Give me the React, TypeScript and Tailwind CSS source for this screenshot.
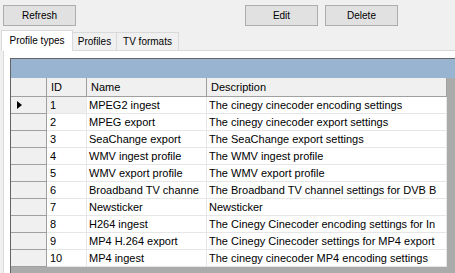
import React from 'react';

const rows: [string, string, string][] = [
  ['1', 'MPEG2 ingest', 'The cinegy cinecoder encoding settings'],
  ['2', 'MPEG export', 'The cinegy cinecoder export settings'],
  ['3', 'SeaChange export', 'The SeaChange export settings'],
  ['4', 'WMV ingest profile', 'The WMV ingest profile'],
  ['5', 'WMV export profile', 'The WMV export profile'],
  ['6', 'Broadband TV channe', 'The Broadband TV channel settings for DVB B'],
  ['7', 'Newsticker', 'Newsticker'],
  ['8', 'H264 ingest', 'The Cinegy Cinecoder encoding settings for In'],
  ['9', 'MP4 H.264 export', 'The Cinegy Cinecoder settings for MP4 export'],
  ['10', 'MP4 ingest', 'The cinegy cinecoder MP4 encoding settings'],
];

function Btn({ children }: { children: React.ReactNode }) {
  return (
    <button className="w-[73px] h-[21px] bg-[#e1e1e1] border border-[#adadad] text-[10px] leading-[19px] text-black">
      {children}
    </button>
  );
}

export default function App() {
  return (
    <div className="w-[455px] h-[273px] overflow-hidden bg-[#f0f0f0] font-['Liberation_Sans',Arial,sans-serif] text-black">
      {/* toolbar */}
      <div className="flex h-[30px] pt-[5px] pl-[3px]">
        <Btn>Refresh</Btn>
        <div className="ml-[169px] flex gap-[7px]">
          <Btn>Edit</Btn>
          <Btn>Delete</Btn>
        </div>
      </div>

      {/* tabs */}
      <div className="flex h-[20px] items-end pl-[1px] text-[10px]">
        <div className="relative z-10 -mb-px h-[21px] w-[72px] bg-white border border-b-0 border-[#d9d9d9] text-center leading-[20px]">
          Profile types
        </div>
        <div className="h-[18px] w-[44px] border border-l-0 border-b-0 border-[#d9d9d9] text-center leading-[17px]">
          Profiles
        </div>
        <div className="h-[18px] w-[62px] border border-l-0 border-b-0 border-[#d9d9d9] text-center leading-[17px]">
          TV formats
        </div>
      </div>

      {/* tab page */}
      <div className="ml-[3px] w-[480px] h-[230px] bg-white border border-[#d9d9d9] pt-[7px] pl-[6px]">
        <div className="w-[470px] h-[230px] border border-[#646464] bg-[#ababab] flex flex-col text-[11px]">
          <div className="h-[19px] bg-[#99b4d1] shrink-0" />
          {/* column headers */}
          <div className="flex h-[19px] shrink-0 bg-[#f0f0f0] border-b border-[#a0a0a0] leading-[18px] w-[436px]">
            <div className="w-[36px] border-r border-[#a0a0a0]" />
            <div className="w-[40px] border-r border-[#a0a0a0] pl-[4px]">ID</div>
            <div className="w-[120px] border-r border-[#a0a0a0] pl-[4px]">Name</div>
            <div className="w-[240px] border-r border-[#a0a0a0] pl-[4px]">Description</div>
          </div>
          {rows.map(([id, name, desc], i) => (
            <div key={id} className="flex h-[17px] shrink-0 leading-[16px] w-[436px]">
              <div className="w-[36px] bg-[#f0f0f0] border-r border-b border-[#a0a0a0] flex items-center pl-[6px]">
                {i === 0 && (
                  <svg width="5" height="8" viewBox="0 0 5 8">
                    <polygon points="0,0 5,4 0,8" fill="#000" />
                  </svg>
                )}
              </div>
              <div className={`w-[40px] border-r border-b border-[#e6e6e6] pl-[3px] whitespace-nowrap overflow-hidden ${i === 0 ? 'bg-[#f0f0f0]' : 'bg-white'}`}>
                {id}
              </div>
              <div className="w-[120px] bg-white border-r border-b border-[#e6e6e6] pl-[2px] whitespace-nowrap overflow-hidden">
                {name}
              </div>
              <div className="w-[240px] bg-white border-r border-b border-[#e6e6e6] pl-[2px] whitespace-nowrap overflow-hidden">
                {desc}
              </div>
            </div>
          ))}
        </div>
      </div>
    </div>
  );
}
